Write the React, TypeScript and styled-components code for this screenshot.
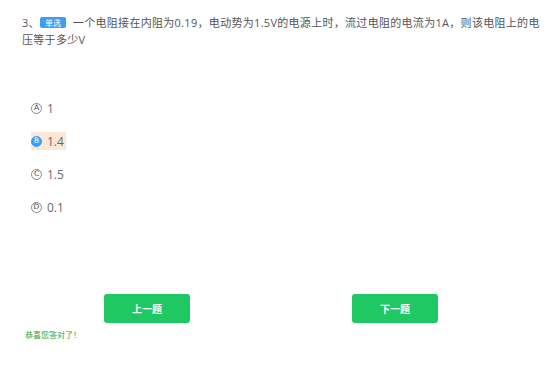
import React from "react";
import styled, { createGlobalStyle } from "styled-components";

const Global = createGlobalStyle`
  html, body { margin: 0; padding: 0; background: #fff; }
  body { font-family: "Open Sans", "Noto Sans CJK SC", sans-serif; }
`;

const Page = styled.div`
  width: 557px;
  height: 368px;
  box-sizing: border-box;
  padding: 14px 12px 0 22px;
`;

const Question = styled.div`
  font-size: 11px;
  line-height: 17px;
  letter-spacing: 0.3px;
  color: #555;
`;

const Badge = styled.span`
  display: inline-block;
  background: #3d9df2;
  color: #fff;
  font-family: "Noto Sans CJK SC", sans-serif;
  font-size: 8px;
  letter-spacing: 0;
  line-height: 11px;
  height: 11px;
  width: 26px;
  text-align: center;
  border-radius: 2px;
  margin: 0 7px 0 0;
  vertical-align: 1px;
`;

const Options = styled.div`
  display: flex;
  flex-direction: column;
  gap: 15px;
  margin: 51px 0 0 9px;
`;

const Option = styled.div<{ $active?: boolean }>`
  display: flex;
  align-items: center;
  gap: 5px;
  align-self: flex-start;
  height: 18px;
  padding-right: 2px;
  background: ${(p) => (p.$active ? "#fde7d7" : "transparent")};
  font-size: 12px;
  color: #6a6a6a;
`;

const Circle = styled.span<{ $active?: boolean }>`
  width: 11px;
  height: 11px;
  box-sizing: border-box;
  border-radius: 50%;
  border: 1px solid ${(p) => (p.$active ? "#3a9ff5" : "#888")};
  background: ${(p) => (p.$active ? "#3a9ff5" : "#fff")};
  color: ${(p) => (p.$active ? "#fff" : "#444")};
  font-size: 7.5px;
  font-family: "DejaVu Sans", sans-serif;
  display: flex;
  align-items: center;
  justify-content: center;
  line-height: 1;
`;

const Buttons = styled.div`
  display: flex;
  gap: 162px;
  margin: 78px 0 0 82px;
`;

const Button = styled.button`
  width: 86px;
  height: 29px;
  border: none;
  border-radius: 3px;
  background: #1fc862;
  color: #fff;
  font-family: "Noto Sans CJK SC", sans-serif;
  font-size: 10px;
  font-weight: 700;
  padding: 0;
`;

const Success = styled.div`
  margin: 6px 0 0 3px;
  font-family: "Noto Sans CJK SC", sans-serif;
  font-size: 8px;
  color: #35a035;
`;

const options = [
  { key: "A", text: "1" },
  { key: "B", text: "1.4", active: true },
  { key: "C", text: "1.5" },
  { key: "D", text: "0.1" },
];

export default function App() {
  return (
    <>
      <Global />
      <Page>
        <Question>
          3、<Badge>单选</Badge>一个电阻接在内阻为0.19，电动势为1.5V的电源上时，流过电阻的电流为1A，则该电阻上的电压等于多少V
        </Question>
        <Options>
          {options.map((o) => (
            <Option key={o.key} $active={o.active}>
              <Circle $active={o.active}>{o.key}</Circle>
              {o.text}
            </Option>
          ))}
        </Options>
        <Buttons>
          <Button>上一题</Button>
          <Button>下一题</Button>
        </Buttons>
        <Success>恭喜您答对了！</Success>
      </Page>
    </>
  );
}
